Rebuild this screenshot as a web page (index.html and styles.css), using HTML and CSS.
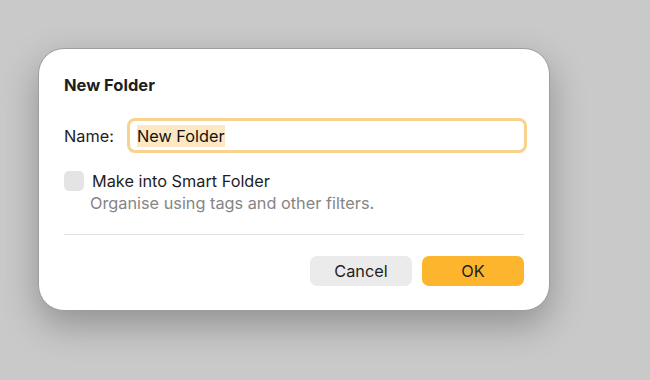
FILE: index.html
```html
<!DOCTYPE html>
<html lang="en">
<head>
  <meta charset="UTF-8" />
  <title>New Folder</title>
  <link rel="stylesheet" href="styles.css">
</head>
<body>
  <div class="dialog">
    <div class="dialog-title">New Folder</div>

    <div class="name-row">
      <span class="name-label">Name:</span>
      <div class="name-input"><span class="selected">New Folder</span></div>
    </div>

    <div class="smart-row">
      <span class="checkbox"></span>
      <div class="smart-text">
        <div class="smart-label">Make into Smart Folder</div>
        <div class="smart-sub">Organise using tags and other filters.</div>
      </div>
    </div>

    <div class="divider"></div>

    <div class="buttons">
      <button class="btn btn-cancel">Cancel</button>
      <button class="btn btn-ok">OK</button>
    </div>
  </div>
</body>
</html>
```

FILE: styles.css
```css
* { margin: 0; padding: 0; box-sizing: border-box; }
html, body {
  height: 100%;
  background: #c9c9c9;
  font-family: Inter, "Noto Sans", sans-serif;
  color: #1e1e1e;
  overflow: hidden;
}
body {
  padding: 48px 0 0 38px;
}

.dialog {
  width: 512px;
  height: 263px;
  background: #fff;
  border: 1px solid #9d9d9d;
  border-radius: 26px;
  padding: 25px 25px 0 25px;
  box-shadow: 0 14px 36px rgba(0,0,0,0.28);
}

.dialog-title {
  font-size: 16.5px;
  font-weight: 700;
  line-height: 22px;
  height: 22px;
}

.name-row {
  display: flex;
  align-items: center;
  margin-top: 22px;
}
.name-label {
  font-size: 16.3px;
  width: 63px;
}
.name-input {
  flex: 1;
  height: 35px;
  margin-right: -3px;
  border: 3px solid #f8d28e;
  border-radius: 8px;
  padding: 0 7px;
  display: flex;
  align-items: center;
  font-size: 16.3px;
  color: #111;
}
.selected {
  background: #fde8c3;
  padding: 2px 0 2px;
  line-height: 18px;
}

.smart-row {
  display: flex;
  margin-top: 18px;
}
.checkbox {
  width: 20px;
  height: 20px;
  border-radius: 5px;
  background: #e4e4e4;
  margin-right: 8px;
  flex-shrink: 0;
}
.smart-label {
  font-size: 16.3px;
  line-height: 21px;
}
.smart-sub {
  font-size: 16.3px;
  line-height: 22px;
  color: #858585;
  margin-left: -2px;
}

.divider {
  height: 1px;
  background: #e2e2e2;
  margin-top: 20px;
}

.buttons {
  display: flex;
  justify-content: flex-end;
  gap: 10px;
  margin-top: 21px;
}
.btn {
  width: 102px;
  height: 30px;
  border: none;
  border-radius: 7px;
  font-family: inherit;
  font-size: 16.3px;
  color: #1e1e1e;
}
.btn-cancel { background: #ebebeb; }
.btn-ok { background: #fcb52c; }
```
